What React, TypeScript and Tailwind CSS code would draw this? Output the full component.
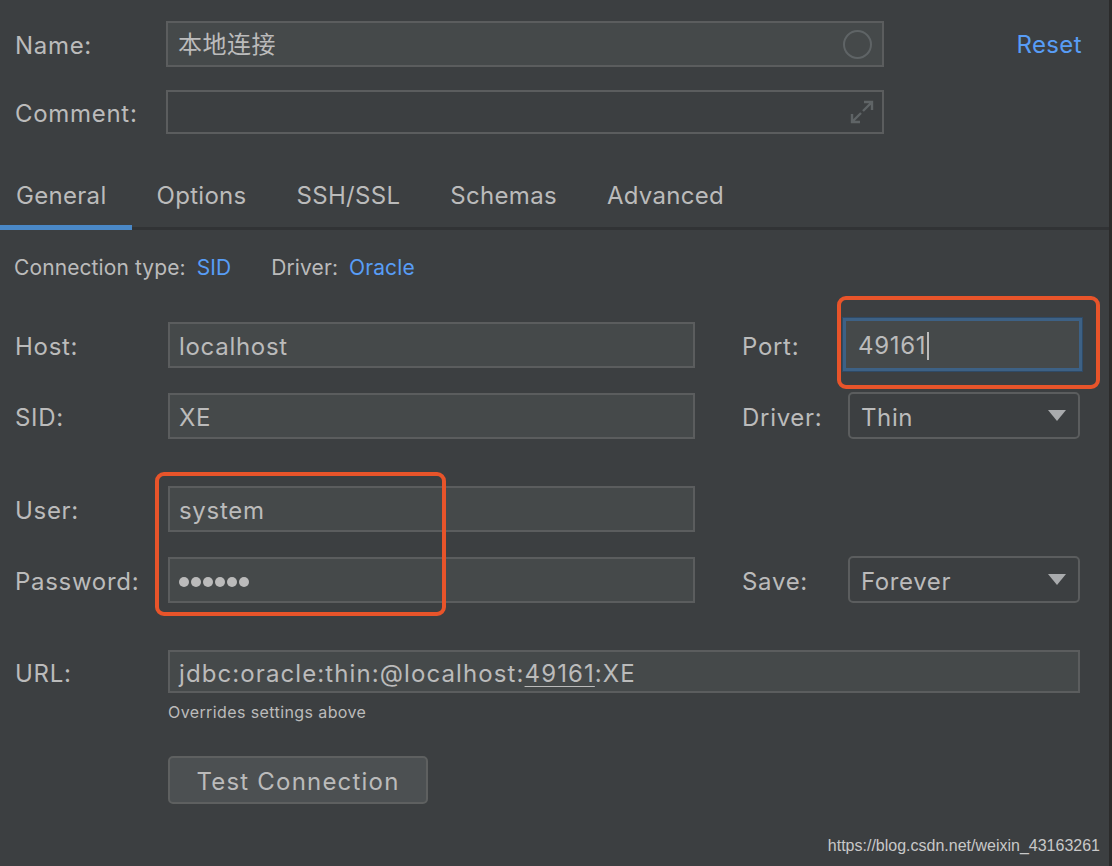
import React from "react";

const font = { fontFamily: "Inter, 'Noto Sans CJK SC', sans-serif" };

function Field({ children, className = "" }: { children?: React.ReactNode; className?: string }) {
  return (
    <div
      className={`flex items-center h-[46px] bg-[#45494a] border-2 border-[#5b5d5e] px-[9px] pt-[4px] text-[24px] tracking-[0.7px] text-[#bbbbbb] ${className}`}
    >
      {children}
    </div>
  );
}

function Select({ value }: { value: string }) {
  return (
    <div className="flex items-center justify-between w-[232px] h-[47px] rounded-[5px] border-2 border-[#5b5d5e] pl-[11px] pr-[12px] text-[24px] tracking-[0.6px] text-[#bbbbbb]">
      <span className="pt-[4px]">{value}</span>
      <svg width="18" height="11" viewBox="0 0 18 11">
        <path d="M0 0h18L9 11z" fill="#a9abad" />
      </svg>
    </div>
  );
}

function Label({ children, className = "" }: { children: React.ReactNode; className?: string }) {
  return <div className={`pt-[4px] text-[24px] tracking-[0.7px] text-[#bbbbbb] ${className}`}>{children}</div>;
}

export default function App() {
  const tabs = ["General", "Options", "SSH/SSL", "Schemas", "Advanced"];
  return (
    <div style={font} className="relative w-[1112px] h-[866px] bg-[#3c3f41] overflow-hidden border-r-[3px] border-[#2b2b2b]">
      {/* header: name + comment */}
      <div className="flex pt-[20px] pl-[15px]">
        <div className="flex flex-col">
          <div className="flex items-center h-[47px]">
            <Label className="w-[151px]">Name:</Label>
            <Field className="w-[718px] !px-[10px] !pt-[2px]">
              <span className="flex-1 tracking-[0.5px]">本地连接</span>
              <span className="w-[29px] h-[29px] rounded-full border-2 border-[#5f6466]" />
            </Field>
          </div>
          <div className="flex items-center h-[44px] mt-[23px]">
            <Label className="w-[151px]">Comment:</Label>
            <div className="flex items-center justify-end w-[718px] h-[44px] border-2 border-[#5b5d5e] pr-[8px]">
              <svg width="24" height="24" viewBox="0 0 24 24" fill="none" stroke="#5f6466" strokeWidth="2.4">
                <path d="M14 2h8v8M22 2l-9 9M10 22H2v-8M2 22l9-9" />
              </svg>
            </div>
          </div>
        </div>
        <div className="ml-auto mr-[27px] h-[47px] pt-[3px] flex items-center text-[24px] tracking-[0.4px] text-[#589df6]">Reset</div>
      </div>

      {/* tabs */}
      <div className="mt-[43px] flex border-b-[3px] border-[#313335] h-[53px]">
        {tabs.map((t, i) => (
          <div
            key={t}
            className={`relative h-full flex items-start pt-[1px] text-[24px] tracking-[0.3px] text-[#bbbbbb] ${i === 0 ? "pl-[16px] pr-[25px]" : "px-[25px]"}`}
          >
            {t}
            {i === 0 && <div className="absolute left-0 right-0 bottom-[-3px] h-[5px] bg-[#4a88c7]" />}
          </div>
        ))}
      </div>

      {/* connection type */}
      <div className="flex items-center pl-[14px] mt-[24px] h-[28px] text-[21px] tracking-[0.1px]">
        <span className="text-[#bbbbbb]">Connection type:</span>
        <span className="ml-[11px] text-[#589df6]">SID</span>
        <span className="ml-[40px] text-[#bbbbbb]">Driver:</span>
        <span className="ml-[11px] text-[#589df6]">Oracle</span>
      </div>

      {/* host / port */}
      <div className="grid grid-cols-[153px_527px_47px_106px_232px] items-center pl-[15px] mt-[36px]">
        <Label>Host:</Label>
        <Field>localhost</Field>
        <div />
        <Label>Port:</Label>
        <div className="relative -ml-[5px]">
          <div className="absolute left-[-6px] top-[-22px] w-[263px] h-[93px] rounded-[9px] border-4 border-[#e8542a]" />
          <div className="flex items-center w-[239px] h-[53px] bg-[#45494a] border-[3px] border-[#3d6185] outline outline-1 outline-[#2f4a66] px-[12px] pt-[3px] text-[24px] tracking-[0.7px] text-[#bbbbbb]">
            49161<span className="ml-[1px] w-[2px] h-[28px] bg-[#bbbbbb]" />
          </div>
        </div>
      </div>
      <div className="grid grid-cols-[153px_527px_47px_106px_232px] items-center pl-[15px] mt-[21px]">
        <Label>SID:</Label>
        <Field>XE</Field>
        <div />
        <Label>Driver:</Label>
        <Select value="Thin" />
      </div>

      {/* user / password */}
      <div className="grid grid-cols-[153px_527px] items-center pl-[15px] mt-[47px]">
        <Label>User:</Label>
        <div className="relative">
          <div className="absolute left-[-13px] top-[-14px] w-[291px] h-[144px] rounded-[9px] border-4 border-[#e8542a]" />
          <Field>system</Field>
        </div>
      </div>
      <div className="grid grid-cols-[153px_527px_47px_106px_232px] items-center pl-[15px] mt-[24px]">
        <Label>Password:</Label>
        <Field>
          <span className="flex gap-[2px]">
            {Array.from({ length: 6 }).map((_, i) => (
              <span key={i} className="w-[10px] h-[10px] rounded-full bg-[#bbbbbb]" />
            ))}
          </span>
        </Field>
        <div />
        <Label>Save:</Label>
        <Select value="Forever" />
      </div>

      {/* url */}
      <div className="grid grid-cols-[153px_912px] items-center pl-[15px] mt-[47px]">
        <Label>URL:</Label>
        <Field className="!h-[43px] !tracking-[1.1px]">
          jdbc:oracle:thin:@localhost:<span className="underline underline-offset-[4px] decoration-1">49161</span>:XE
        </Field>
      </div>
      <div className="pl-[168px] mt-[7px] text-[16px] tracking-[0.4px] text-[#bbbbbb]">Overrides settings above</div>

      <div className="pl-[168px] mt-[32px]">
        <div className="inline-flex items-center justify-center w-[260px] h-[48px] rounded-[5px] bg-[#4c5052] border-2 border-[#5e6060] pt-[3px] text-[24px] tracking-[1.2px] text-[#bbbbbb]">
          Test Connection
        </div>
      </div>

      <div
        className="absolute right-[9px] bottom-[8px] text-[16px] text-[#c8c8c8]"
        style={{ fontFamily: "'Liberation Sans', Arial, sans-serif" }}
      >
        https://blog.csdn.net/weixin_43163261
      </div>
    </div>
  );
}
